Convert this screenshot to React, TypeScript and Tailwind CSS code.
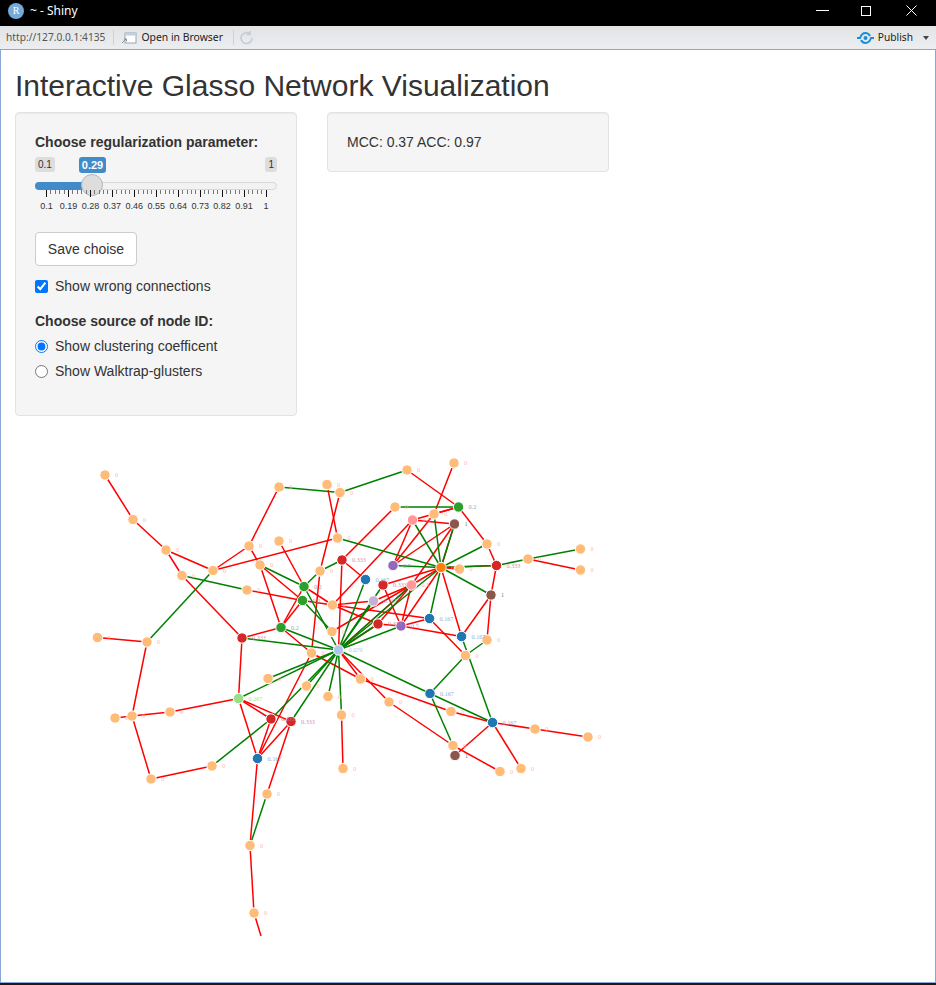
import React from "react";

const C: Record<string, string> = {
  a: "#ffbb78", g: "#2ca02c", r: "#d62728", b: "#1f77b4", c: "#aec7e8", l: "#98df8a",
  p: "#ff9896", u: "#9467bd", w: "#8c564b", o: "#ff7f0e", v: "#c5b0d5",
};
const L: Record<string, string> = {
  a: "#ffb09a", g: "#7f9f8f", r: "#c77f9f", b: "#7f9fd0", c: "#a9c4ee", l: "#98df8a",
  p: "#ff9896", u: "#8f8fe0", w: "#6b5a55", o: "#ff9f5e", v: "#b9a4e0",
};

type N = [number, number, string, string];
const N: Record<string, N> = {
  a1: [105, 475, "a", "0"], a2: [133, 519.5, "a", "0"], a3: [166, 550, "a", "0"], a4: [182, 575.5, "a", "0"],
  a5: [213, 570.5, "a", "0"], a6: [249, 546, "a", "0"], a7: [260, 565, "a", "0"], a8: [279, 541, "a", "0"],
  a9: [279, 487, "a", "0"], a10: [327, 484.5, "a", "0"], a11: [340, 492.5, "a", "0"], a12: [337.5, 538, "a", "0"],
  a13: [320, 571, "a", "0"], a14: [247, 590, "a", "0"], g1: [304, 586.5, "g", "0.2"], g2: [302.5, 600.5, "g", "0.2"],
  g3: [281, 627.5, "g", "0.2"], r1: [242, 638, "r", "0.333"], a15: [332.5, 605, "a", "0"], a16: [332, 631.5, "a", "0"],
  a17: [311.5, 653, "a", "0"], c: [338.5, 650, "c", "0.079"], a18: [147, 642, "a", "0"], a19: [97.5, 637.5, "a", "0"],
  a20: [268, 678.5, "a", "0"], a21: [306.5, 686, "a", "0"], a22: [328, 696.5, "a", "0"], lg: [238.5, 698.5, "l", "0.267"],
  a23: [170, 712, "a", "0"], a24: [132, 716, "a", "0"], a25: [115, 718, "a", "0"], a26: [151, 779, "a", "0"],
  a27: [212, 766, "a", "0"], r2: [271, 719, "r", "0.333"], r3: [291, 721.5, "r", "0.333"], b1: [257.5, 758.5, "b", "0.167"],
  a28: [267, 794, "a", "0"], a29: [250, 845.5, "a", "0"], a30: [254, 913, "a", "0"], a31: [341.5, 715, "a", "0"],
  a32: [343, 768.5, "a", "0"], a33: [407, 470, "a", "0"], a34: [454, 463, "a", "0"], g4: [458.5, 507, "g", "0.2"],
  a35: [395, 507, "a", "0"], a36: [434, 514, "a", "0"], p1: [412.5, 520, "p", "0.5"], w1: [454.5, 524, "w", "1"],
  a37: [487, 544, "a", "0"], r4: [342, 560, "r", "0.333"], u1: [393, 565.5, "u", "0.5"], o: [441, 567.5, "o", "0.2"],
  a38: [459.5, 569, "a", "0"], r5: [496.5, 565.5, "r", "0.333"], a39: [528, 559, "a", "0"], a40: [580.5, 549, "a", "0"],
  a41: [580.5, 570, "a", "0"], b2: [365.5, 579.5, "b", "0.167"], r6: [383, 585, "r", "0.333"], p2: [411.5, 585, "p", "0.5"],
  w2: [491, 595, "w", "1"], v: [373.5, 601, "v", "0.167"], r7: [378, 624, "r", "0.333"], u2: [401, 626, "u", "0.5"],
  b3: [429.5, 618.5, "b", "0.167"], b4: [461.5, 636.5, "b", "0.167"], a42: [487, 640, "a", "0"], a43: [465.5, 655.5, "a", "0"],
  a44: [360.5, 679, "a", "0"], b5: [430, 693.5, "b", "0.167"], a45: [389, 702, "a", "0"], a46: [451, 711.5, "a", "0"],
  b6: [492.5, 722.5, "b", "0.167"], a47: [535, 729, "a", "0"], a48: [588, 737, "a", "0"], a49: [453, 745.5, "a", "0"],
  w3: [455, 755.5, "w", "1"], a50: [500, 771.5, "a", "0"], a51: [521, 768.5, "a", "0"],
};

const red = "a1-a2 a2-a3 a3-a4 a3-a5 a4-r1 a5-a6 a5-a12 a6-a9 a6-a7 a7-g2 a7-g3 a8-g1 a14-g2 a18-a19 a18-a24 a24-a25 a24-a23 a24-a26 a23-lg a26-a27 a10-a12 a11-a13 a35-r4 r4-b2 r4-c g1-a15 g2-a15 g2-g3 g1-g3 g3-a17 r1-g3 r1-lg a13-a17 a16-p2 a15-v a15-b3 a15-r7 v-p2 c-a44 c-a45 a17-a44 a44-a46 a46-b6 a45-a49 b6-a47 a47-a48 b6-w3 b6-a51 a49-a50 a33-g4 a34-a36 g4-a36 g4-p1 g4-a37 p1-w1 p1-u1 p1-a15 a36-u1 w1-o w1-u1 w1-p2 a37-r5 o-a38 o-r5 r5-w2 w2-b4 w2-a42 o-b4 o-u2 o-p2 o-r6 p2-u2 r6-u2 r7-u2 r7-c u2-b3 u2-b4 b3-a43 lg-r2 lg-r3 lg-b1 r2-b1 r3-b1 r3-a28 a17-b1 b1-a29 a29-a30 a31-a32 r7-p2 p2-c a39-a41 a30-end".split(" ");
const green = "a4-a14 a5-a18 a7-g1 a27-r2 a9-a11 a11-a33 a12-o r4-a13 a13-g1 g2-a16 g1-c g3-c r1-c lg-c r3-c r2-c a20-c a21-c a22-c a31-c b2-c v-c r7-c u2-c p2-c r6-c o-c c-b5 b5-a43 b5-a49 b5-b6 b4-b6 a35-g4 p1-o a36-o w1-o a37-o u1-o o-r5 r5-a39 a39-a40 o-w2 a42-a43 o-b3 a28-a29".split(" ");
const P: Record<string, number[]> = { end: [261, 936] };

function Edge({ id, color }: { id: string; color: string }) {
  const [s, t] = id.split("-");
  const A = N[s] ?? P[s];
  const B = N[t] ?? P[t];
  return <line x1={A[0]} y1={A[1]} x2={B[0]} y2={B[1]} stroke={color} strokeWidth={1.5} />;
}

function Graph() {
  return (
    <svg width="936" height="540" viewBox="0 430 936 540" className="block">
      {red.map((e) => <Edge key={"r" + e} id={e} color="#ff0000" />)}
      {green.map((e) => <Edge key={"g" + e} id={e} color="#008000" />)}
      {Object.entries(N).map(([k, [x, y, col]]) => (
        <circle key={k} cx={x} cy={y} r={5.2} fill={C[col]} stroke="#ffffff" strokeWidth={1} />
      ))}
      {Object.entries(N).map(([k, [x, y, col, lab]]) => (
        <text key={k} x={x + 10} y={y + 2} fontSize={6.2} fontFamily="'Liberation Serif', serif" fill={L[col]} opacity={0.85}>{lab}</text>
      ))}
    </svg>
  );
}

function Slider() {
  const ticks = ["0.1", "0.19", "0.28", "0.37", "0.46", "0.55", "0.64", "0.73", "0.82", "0.91", "1"];
  return (
    <div className="relative h-[70px] mt-[5px]">
      <span className="absolute left-0 top-0 h-[15px] px-[3px] leading-[15px] text-[10px] rounded-[3px] bg-[#dddddd] text-[#333333]">0.1</span>
      <span className="absolute right-0 top-0 h-[15px] px-[3px] leading-[15px] text-[10px] rounded-[3px] bg-[#dddddd] text-[#333333]">1</span>
      <span className="absolute left-[44px] top-0 h-[16px] w-[27px] text-center leading-[16px] text-[11px] font-bold rounded-[3px] bg-[#428bca] text-white">0.29</span>
      <div className="absolute left-0 right-0 top-[25px] h-[8px] rounded-[4px] bg-[#f2f2f2] border border-[#d8d8d8]" />
      <div className="absolute left-0 w-[57px] top-[25px] h-[8px] rounded-l-[4px] bg-[#428bca]" />
      <div className="absolute left-[46px] top-[17px] w-[22px] h-[22px] rounded-full bg-[#dddddd] border border-[#b5b5b5]" />
      <div className="absolute left-[11px] top-[33px] w-[221px] flex justify-between">
        {ticks.map((t, i) => (
          <React.Fragment key={t}>
            <div className="relative w-px h-[7px] bg-[#111111]">
              <span className="absolute left-1/2 -translate-x-1/2 top-[11px] text-[9px] leading-[11px] text-[#333333]">{t}</span>
            </div>
            {i < 10 && [0, 1, 2, 3].map((j) => <div key={j} className="w-px h-[4px] bg-[#777777]" />)}
          </React.Fragment>
        ))}
      </div>
    </div>
  );
}

function Radio({ on, label }: { on?: boolean; label: string }) {
  return (
    <label className="flex items-center h-[25px] text-[14px]">
      <input type="radio" name="src" defaultChecked={on} className="w-[13px] h-[13px] mr-[7px] accent-[#0075ff]" />
      {label}
    </label>
  );
}

export default function App() {
  return (
    <div className="w-[936px] h-[985px] flex flex-col overflow-hidden bg-white text-[#333333] font-['Liberation_Sans',Arial,sans-serif]">
      <div className="h-[26px] pb-[5px] bg-black flex items-center text-white shrink-0">
        <div className="ml-[8px] w-[16px] h-[16px] rounded-full bg-[#75aadb] text-[10px] leading-[16px] text-center font-['Liberation_Serif',serif]">R</div>
        <span className="ml-[6px] text-[12px] font-['Noto_Sans',sans-serif]">~ - Shiny</span>
        <div className="ml-auto flex items-center">
          <div className="w-[13px] h-px bg-white mr-[32px]" />
          <div className="w-[10px] h-[10px] border border-white mr-[35px]" />
          <svg width="11" height="11" viewBox="0 0 11 11" className="mr-[19px]"><path d="M.5.5l10 10M10.5.5l-10 10" stroke="#fff" strokeWidth="1" /></svg>
        </div>
      </div>
      <div className="h-[23px] shrink-0 flex items-center text-[10.2px] bg-gradient-to-b from-[#e2e3e5] to-[#eceef1] font-['Noto_Sans',sans-serif]">
        <span className="ml-[6px] text-[#555555]">http://127.0.0.1:4135</span>
        <div className="ml-[8px] w-px h-[15px] bg-[#cfd1d4]" />
        <svg width="16" height="14" viewBox="0 0 16 14" className="ml-[7px]">
          <rect x="4" y="2" width="11" height="10" fill="#fff" stroke="#9aa5b1" />
          <rect x="4" y="2" width="11" height="2.5" fill="#bcd0e6" />
          <path d="M1 12l4-4M3 8h2.500v2.500" stroke="#8a8f95" fill="none" />
        </svg>
        <span className="ml-[4px] text-[10.4px] text-[#222222]">Open in Browser</span>
        <div className="ml-[10px] w-px h-[15px] bg-[#cfd1d4]" />
        <svg width="16" height="16" viewBox="0 0 16 16" className="ml-[5px]">
          <path d="M13 8a5.500 5.500 0 1 1-2-4.200M11 1v3.500H7.500" stroke="#c4ccd6" strokeWidth="1.5" fill="none" />
        </svg>
        <svg width="17" height="12" viewBox="0 0 17 12" className="ml-auto">
          <path d="M0 6h3c1-3 3-5 5.500-5 2 0 3.500 1 4.500 3M17 6h-3c-1 3-3 5-5.500 5-2 0-3.500-1-4.500-3" stroke="#1a8fd8" strokeWidth="2" fill="none" />
          <circle cx="8.5" cy="6" r="2" fill="#1a8fd8" />
        </svg>
        <span className="ml-[4px] text-[#222222]">Publish</span>
        <svg width="6" height="4" viewBox="0 0 6 4" className="ml-[10px] mr-[7px]"><path d="M0 0h6L3 4z" fill="#444" /></svg>
      </div>
      <div className="flex-1 min-h-0 border border-[#8aa6d6]">
        <div className="px-[14px]">
          <h2 className="text-[30px] leading-[33px] font-normal mt-[19px] mb-[10px]">Interactive Glasso Network Visualization</h2>
          <div className="flex items-start gap-[30px]">
            <div className="w-[282px] h-[304px] bg-[#f5f5f5] border border-[#e3e3e3] rounded-[4px] px-[19px] pt-[19px] shadow-[inset_0_1px_1px_rgba(0,0,0,0.05)]">
              <div className="text-[14px] leading-[20px] font-bold">Choose regularization parameter:</div>
              <Slider />
              <button className="mt-[5px] h-[34px] w-[102px] block bg-white border border-[#cccccc] rounded-[4px] text-[14px]">Save choise</button>
              <label className="flex items-center mt-[10px] h-[20px] text-[14px]">
                <input type="checkbox" defaultChecked className="w-[13px] h-[13px] mr-[7px] accent-[#0075ff]" />
                Show wrong connections
              </label>
              <div className="text-[14px] leading-[20px] font-bold mt-[15px]">Choose source of node ID:</div>
              <div className="mt-[3px]">
                <Radio on label="Show clustering coefficent" />
                <Radio label="Show Walktrap-glusters" />
              </div>
            </div>
            <div className="w-[282px] h-[60px] bg-[#f5f5f5] border border-[#e3e3e3] rounded-[4px] px-[19px] flex items-center text-[14px] shadow-[inset_0_1px_1px_rgba(0,0,0,0.05)]">
              MCC: 0.37 ACC: 0.97
            </div>
          </div>
        </div>
        <div className="-ml-px mt-[14px]">
          <Graph />
        </div>
      </div>
      <div className="h-[2px] shrink-0 bg-[#1a1a1a]" />
    </div>
  );
}
